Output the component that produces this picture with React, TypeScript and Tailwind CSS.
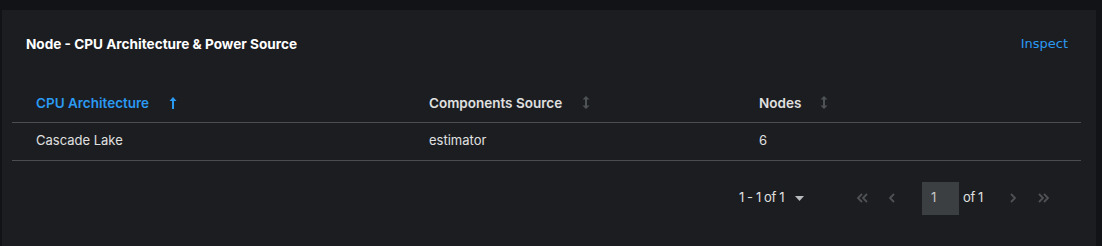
import { useState } from 'react'

const rows = [{ arch: 'Cascade Lake', source: 'estimator', nodes: 6 }]

function SortIcon({ active }: { active?: boolean }) {
  if (active) {
    return (
      <svg width="8" height="12" viewBox="0 0 8 12" className="text-[#2b9af3]">
        <path d="M4 0 L7.5 4 H5 V12 H3 V4 H0.5 Z" fill="currentColor" />
      </svg>
    )
  }
  return (
    <svg width="8" height="13" viewBox="0 0 8 13" className="text-[#4f5255]">
      <path d="M4 0 L7.5 3.5 H5 V9.5 H7.5 L4 13 L0.5 9.5 H3 V3.5 H0.5 Z" fill="currentColor" />
    </svg>
  )
}

function Chevron({ dir, double }: { dir: 'left' | 'right'; double?: boolean }) {
  const d = dir === 'left' ? 'M6 1 L2 5 L6 9' : 'M2 1 L6 5 L2 9'
  return (
    <svg width={double ? 12 : 8} height="10" viewBox={double ? '0 0 12 10' : '0 0 8 10'} className="text-[#4f5255]">
      <path d={d} fill="none" stroke="currentColor" strokeWidth="1.8" />
      {double && <path d={d} transform="translate(5 0)" fill="none" stroke="currentColor" strokeWidth="1.8" />}
    </svg>
  )
}

export default function App() {
  const [page] = useState('1')
  return (
    <div className="w-[1102px] h-[246px] bg-[#121316] pt-[10px] pl-[2px] pr-[6px] overflow-hidden font-['Inter','Noto_Sans',sans-serif]">
      <div className="h-full bg-[#1b1d21] pt-[25px] px-[10px]">
        {/* Header */}
        <div className="flex items-center justify-between pl-[14px] pr-[18px] h-[18px]">
          <h2 className="text-[13.6px] font-bold text-white">
            Node - CPU Architecture &amp; Power Source
          </h2>
          <a className="text-[13px] text-[#2b9af3] font-['DejaVu_Sans',sans-serif]">Inspect</a>
        </div>

        {/* Table */}
        <table className="mt-[31px] w-[1069px] text-[13px] border-collapse">
          <thead>
            <tr className="border-b border-[#4a4d51] h-[38px] align-middle">
              <th className="w-[393px] pl-[24px] text-left text-[13.5px] font-semibold text-[#2b9af3]">
                <span className="inline-flex items-center gap-[20px]">
                  CPU Architecture <SortIcon active />
                </span>
              </th>
              <th className="w-[330px] pl-[24px] text-left text-[13.5px] font-semibold text-[#e0e0e0]">
                <span className="inline-flex items-center gap-[20px]">
                  Components Source <SortIcon />
                </span>
              </th>
              <th className="pl-[24px] text-left text-[13.5px] font-semibold text-[#e0e0e0]">
                <span className="inline-flex items-center gap-[19px]">
                  Nodes <SortIcon />
                </span>
              </th>
            </tr>
          </thead>
          <tbody>
            {rows.map((r) => (
              <tr key={r.arch} className="border-b border-[#4a4d51] h-[38px] text-[#e0e0e0]">
                <td className="pl-[24px]">{r.arch}</td>
                <td className="pl-[24px]">{r.source}</td>
                <td className="pl-[24px]">{r.nodes}</td>
              </tr>
            ))}
          </tbody>
        </table>

        {/* Pagination */}
        <div className="flex items-center justify-end mt-[21px] pr-[28px] text-[13px] text-[#e0e0e0]">
          <div className="flex items-center gap-[11px] mr-[43px]">
            <span className="tracking-[-0.4px]">1 - 1 of 1</span>
            <svg width="9" height="5" viewBox="0 0 9 5" className="text-[#b8bbbe]">
              <path d="M0 0 H9 L4.5 5 Z" fill="currentColor" />
            </svg>
          </div>
          <div className="flex items-center">
            <span className="w-[30px] flex justify-center"><Chevron dir="left" double /></span>
            <span className="w-[30px] flex justify-center"><Chevron dir="left" /></span>
            <div className="ml-[15px] w-[37px] h-[33px] bg-[#3c3f42] flex items-center pl-[9px] text-[#c7c7c7]">
              {page}
            </div>
            <span className="ml-[4px] mr-[15px] tracking-[-0.4px]">of 1</span>
            <span className="w-[30px] flex justify-center"><Chevron dir="right" /></span>
            <span className="w-[30px] flex justify-center"><Chevron dir="right" double /></span>
          </div>
        </div>
      </div>
    </div>
  )
}
